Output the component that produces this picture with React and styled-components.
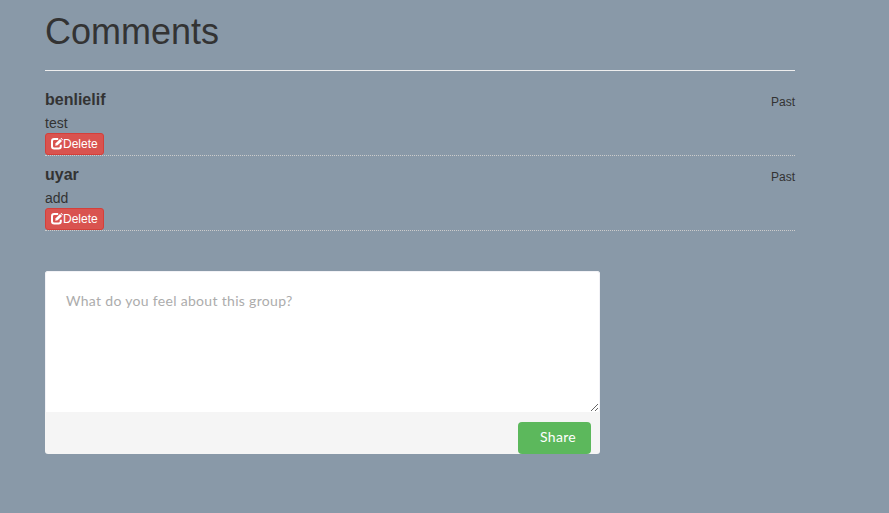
import React from 'react';
import styled, { createGlobalStyle } from 'styled-components';

const GlobalStyle = createGlobalStyle`
  *, *::before, *::after { box-sizing: border-box; }
  body {
    margin: 0;
    background: #8999a8;
    color: #333;
    font: 14px/20px "Liberation Sans", Arial, sans-serif;
  }
`;

const Page = styled.main`
  width: 750px;
  margin-left: 45px;
  padding-top: 12px;
`;

const Title = styled.h1`
  margin: 0;
  height: 59px;
  font-size: 36px;
  font-weight: 500;
  line-height: 40px;
  border-bottom: 1px solid #eee;
`;

const CommentList = styled.ul`
  list-style: none;
  margin: 10px 0 40px;
  padding: 0;
`;

const Comment = styled.li`
  height: 75px;
  padding-top: 9px;
  border-bottom: 1px dotted #ccc;
`;

const CommentHeader = styled.div`
  display: flex;
  justify-content: space-between;
  height: 23px;
`;

const Author = styled.strong`
  font-size: 16px;
  line-height: 20px;
`;

const Time = styled.span`
  font-size: 12px;
  line-height: 24px;
`;

const CommentText = styled.p`
  margin: 0;
  line-height: 20px;
`;

const DeleteButton = styled.button`
  display: flex;
  align-items: center;
  width: 59px;
  height: 22px;
  padding: 1px 5px;
  font: 12px/18px "Liberation Sans", Arial, sans-serif;
  color: #fff;
  background: #d9534f;
  border: 1px solid #d43f3a;
  border-radius: 3px;
`;

const Icon = styled.svg`
  flex: none;
  width: 12px;
  height: 12px;
`;

const Composer = styled.form`
  width: 555px;
  height: 183px;
  background: #f5f5f5;
  border-radius: 3px;
  overflow: hidden;
`;

const Message = styled.textarea`
  display: block;
  width: 555px;
  height: 141px;
  padding: 19px 20px;
  font: 14px/20px Lato, sans-serif;
  letter-spacing: 0.31px;
  color: #555;
  background: #fff;
  border: 1px solid #f2f2f6;
  border-bottom: 0;
  border-radius: 3px 3px 0 0;
  outline: 0;
  resize: both;
  &::placeholder { color: #acacac; }
`;

const Actions = styled.div`
  display: flex;
  justify-content: flex-end;
  padding: 10px 9px 0 0;
`;

const ShareButton = styled.button`
  width: 73px;
  height: 32px;
  padding: 0 15px 2px 22px;
  text-align: left;
  font: 14px/20px Lato, sans-serif;
  letter-spacing: 0.31px;
  color: #fff;
  background: #5cb85c;
  border: 0;
  border-radius: 4px;
`;

const EditIcon = () => (
  <Icon viewBox="0 0 12 12" aria-hidden="true">
    <path d="M7.2 1.1H3.2Q1 1.1 1 3.3v4.9q0 2.2 2.2 2.2h4.4q2.2 0 2.2-2.2V6.8" fill="none" stroke="#fff" strokeWidth="2" />
    <path d="M4.2 7.7l.5-2.5 4.3-4.3 2 2-4.3 4.3z" fill="#fff" />
    <path d="M9.6.4l.4-.3q.2-.2.5 0l1.3 1.3q.2.2 0 .5l-.3.4z" fill="#fff" />
  </Icon>
);

const comments = [
  { author: 'benlielif', text: 'test', time: 'Past' },
  { author: 'uyar', text: 'add', time: 'Past' },
];

export default function App() {
  return (
    <>
      <GlobalStyle />
      <Page>
        <Title>Comments</Title>
        <CommentList>
          {comments.map(({ author, text, time }) => (
            <Comment key={author}>
              <CommentHeader>
                <Author>{author}</Author>
                <Time>{time}</Time>
              </CommentHeader>
              <CommentText>{text}</CommentText>
              <DeleteButton type="button"><EditIcon />Delete</DeleteButton>
            </Comment>
          ))}
        </CommentList>
        <Composer>
          <Message placeholder="What do you feel about this group?" />
          <Actions><ShareButton type="button">Share</ShareButton></Actions>
        </Composer>
      </Page>
    </>
  );
}
